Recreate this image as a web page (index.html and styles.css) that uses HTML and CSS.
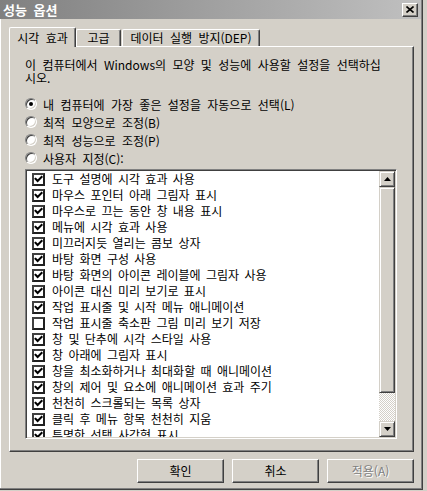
FILE: index.html
```html
<!DOCTYPE html>
<html lang="ko">
<head>
<meta charset="utf-8">
<title>성능 옵션</title>
<link rel="stylesheet" href="styles.css">
</head>
<body>
<div class="window">
  <div class="titlebar">
    <span class="title">성능 옵션</span>
    <div class="close"><svg width="8" height="7" viewBox="0 0 8 7"><path d="M0.5 0.5 L7.5 6.5 M7.5 0.5 L0.5 6.5" stroke="#000" stroke-width="1.6" fill="none"/></svg></div>
  </div>
  <div class="tabs">
    <div class="tab active">시각 효과</div>
    <div class="tab t2">고급</div>
    <div class="tab t3">데이터 실행 방지(DEP)</div>
  </div>
  <div class="panel">
    <p class="desc">이 컴퓨터에서 Windows의 모양 및 성능에 사용할 설정을 선택하십<br>시오.</p>
    <div class="radios">
      <div class="radio-row"><span class="radio on"></span><span>내 컴퓨터에 가장 좋은 설정을 자동으로 선택(L)</span></div>
      <div class="radio-row"><span class="radio"></span><span>최적 모양으로 조정(B)</span></div>
      <div class="radio-row"><span class="radio"></span><span>최적 성능으로 조정(P)</span></div>
      <div class="radio-row"><span class="radio"></span><span>사용자 지정(C):</span></div>
    </div>
    <div class="listbox">
      <ul class="items">
        <li><span class="cb"><svg viewBox="0 0 9 9"><path d="M1.5 3.8 L3.6 6 L7.6 2" /></svg></span>도구 설명에 시각 효과 사용</li>
        <li><span class="cb"><svg viewBox="0 0 9 9"><path d="M1.5 3.8 L3.6 6 L7.6 2" /></svg></span>마우스 포인터 아래 그림자 표시</li>
        <li><span class="cb"><svg viewBox="0 0 9 9"><path d="M1.5 3.8 L3.6 6 L7.6 2" /></svg></span>마우스로 끄는 동안 창 내용 표시</li>
        <li><span class="cb"><svg viewBox="0 0 9 9"><path d="M1.5 3.8 L3.6 6 L7.6 2" /></svg></span>메뉴에 시각 효과 사용</li>
        <li><span class="cb"><svg viewBox="0 0 9 9"><path d="M1.5 3.8 L3.6 6 L7.6 2" /></svg></span>미끄러지듯 열리는 콤보 상자</li>
        <li><span class="cb"><svg viewBox="0 0 9 9"><path d="M1.5 3.8 L3.6 6 L7.6 2" /></svg></span>바탕 화면 구성 사용</li>
        <li><span class="cb"><svg viewBox="0 0 9 9"><path d="M1.5 3.8 L3.6 6 L7.6 2" /></svg></span>바탕 화면의 아이콘 레이블에 그림자 사용</li>
        <li><span class="cb"><svg viewBox="0 0 9 9"><path d="M1.5 3.8 L3.6 6 L7.6 2" /></svg></span>아이콘 대신 미리 보기로 표시</li>
        <li><span class="cb"><svg viewBox="0 0 9 9"><path d="M1.5 3.8 L3.6 6 L7.6 2" /></svg></span>작업 표시줄 및 시작 메뉴 애니메이션</li>
        <li><span class="cb"></span>작업 표시줄 축소판 그림 미리 보기 저장</li>
        <li><span class="cb"><svg viewBox="0 0 9 9"><path d="M1.5 3.8 L3.6 6 L7.6 2" /></svg></span>창 및 단추에 시각 스타일 사용</li>
        <li><span class="cb"><svg viewBox="0 0 9 9"><path d="M1.5 3.8 L3.6 6 L7.6 2" /></svg></span>창 아래에 그림자 표시</li>
        <li><span class="cb"><svg viewBox="0 0 9 9"><path d="M1.5 3.8 L3.6 6 L7.6 2" /></svg></span>창을 최소화하거나 최대화할 때 애니메이션</li>
        <li><span class="cb"><svg viewBox="0 0 9 9"><path d="M1.5 3.8 L3.6 6 L7.6 2" /></svg></span>창의 제어 및 요소에 애니메이션 효과 주기</li>
        <li><span class="cb"><svg viewBox="0 0 9 9"><path d="M1.5 3.8 L3.6 6 L7.6 2" /></svg></span>천천히 스크롤되는 목록 상자</li>
        <li><span class="cb"><svg viewBox="0 0 9 9"><path d="M1.5 3.8 L3.6 6 L7.6 2" /></svg></span>클릭 후 메뉴 항목 천천히 지움</li>
        <li><span class="cb"><svg viewBox="0 0 9 9"><path d="M1.5 3.8 L3.6 6 L7.6 2" /></svg></span>투명한 선택 사각형 표시</li>
      </ul>
      <div class="scrollbar">
        <div class="sbtn"><svg width="7" height="4" viewBox="0 0 7 4"><path d="M3.5 0 L7 4 L0 4 Z" fill="#000"/></svg></div>
        <div class="track"><div class="thumb"></div></div>
        <div class="sbtn"><svg width="7" height="4" viewBox="0 0 7 4"><path d="M0 0 L7 0 L3.5 4 Z" fill="#000"/></svg></div>
      </div>
    </div>
  </div>
  <div class="buttons">
    <div class="btn">확인</div>
    <div class="btn">취소</div>
    <div class="btn disabled">적용(A)</div>
  </div>
</div>
</body>
</html>
```
FILE: styles.css
```css
* { box-sizing: border-box; }
html, body {
  margin: 0;
  padding: 0;
}
body {
  width: 427px;
  height: 491px;
  overflow: hidden;
  background: #d4d0c8;
  font-family: "Noto Sans CJK KR", "Noto Sans", sans-serif;
  font-size: 12px;
  color: #000;
  word-spacing: 3px;
}
.window {
  width: 423px;
  height: 490px;
  border-right: 1px solid #404040;
  border-bottom: 1px solid #404040;
  box-shadow: inset -1px -1px #808080, inset 1px 0 #fff;
  background: #d4d0c8;
}
.titlebar {
  height: 19px;
  width: 421px;
  display: flex;
  align-items: center;
  background: linear-gradient(to right, #808080, #c0c0c0);
  padding-left: 3px;
  padding-right: 3px;
}
.title {
  color: #fff;
  font-weight: bold;
  font-size: 13px;
  line-height: 19px;
}
.close {
  margin-left: auto;
  width: 16px;
  height: 14px;
  background: #d4d0c8;
  border: 1px solid;
  border-color: #fff #404040 #404040 #fff;
  box-shadow: inset -1px -1px #808080;
  display: flex;
  align-items: center;
  justify-content: center;
  padding-bottom: 1px;
}
.close svg { display: block; }
.tabs {
  margin-top: 8px;
  margin-left: 9px;
  height: 19px;
  display: flex;
  align-items: flex-end;
}
.tab {
  height: 17px;
  background: #d4d0c8;
  border-top: 1px solid #fff;
  border-left: 1px solid #fff;
  border-right: 1px solid #404040;
  border-radius: 2px 2px 0 0;
  box-shadow: inset -1px 0 #808080;
  text-align: center;
  line-height: 16px;
  white-space: nowrap;
}
.tab.active {
  height: 20px;
  width: 67px;
  margin-bottom: -1px;
  position: relative;
  z-index: 1;
  line-height: 19px;
}
.tab.t2 { width: 45px; }
.tab.t3 { width: 138px; margin-left: 1px; }
.panel {
  margin-left: 9px;
  width: 405px;
  height: 406px;
  border-top: 1px solid #fff;
  border-left: 1px solid #fff;
  border-right: 1px solid #404040;
  border-bottom: 1px solid #404040;
  box-shadow: inset -1px -1px #808080;
  padding: 11px 16px 0 15px;
}
.desc {
  margin: 0;
  line-height: 13px;
  white-space: nowrap;
}
.radios {
  margin-top: 11px;
}
.radio-row {
  height: 18px;
  display: flex;
  align-items: center;
  gap: 6px;
  white-space: nowrap;
}
.radio {
  width: 12px;
  height: 12px;
  border-radius: 50%;
  background: #fff;
  border: 1px solid;
  border-color: #808080 #fff #fff #808080;
  box-shadow: inset 1px 1px #404040, inset -1px -1px #d4d0c8;
  display: flex;
  align-items: center;
  justify-content: center;
  flex: none;
}
.radio.on::after {
  content: "";
  width: 4px;
  height: 4px;
  border-radius: 50%;
  background: #000;
}
.listbox {
  margin-top: 2px;
  width: 372px;
  height: 270px;
  border: 1px solid;
  border-color: #808080 #fff #fff #808080;
  box-shadow: inset 1px 1px #404040, inset -1px -1px #d4d0c8;
  background: #fff;
  padding: 1px;
  display: flex;
}
.items {
  flex: 1;
  list-style: none;
  margin: 0;
  padding: 0 0 0 5px;
  overflow: hidden;
  word-spacing: 2px;
}
.items li {
  height: 16px;
  display: flex;
  align-items: center;
  gap: 7px;
  white-space: nowrap;
  line-height: 16px;
}
.cb {
  width: 13px;
  height: 13px;
  flex: none;
  background: #fff;
  border: 2px solid #202020;
  border-top-color: #404040;
  border-left-color: #404040;
  display: flex;
  align-items: center;
  justify-content: center;
}
.cb svg {
  width: 9px;
  height: 9px;
  display: block;
}
.cb path {
  fill: none;
  stroke: #000;
  stroke-width: 2;
  stroke-linecap: square;
}
.scrollbar {
  width: 16px;
  display: flex;
  flex-direction: column;
}
.sbtn {
  height: 16px;
  flex: none;
  background: #d4d0c8;
  border: 1px solid;
  border-color: #d4d0c8 #404040 #404040 #d4d0c8;
  box-shadow: inset 1px 1px #fff, inset -1px -1px #808080;
  display: flex;
  align-items: center;
  justify-content: center;
}
.sbtn svg { display: block; }
.track {
  flex: 1;
  background-color: #d4d0c8;
  background-image: repeating-conic-gradient(#fff 0 25%, #d4d0c8 0 50%);
  background-size: 2px 2px;
}
.thumb {
  height: 206px;
  background: #d4d0c8;
  border: 1px solid;
  border-color: #d4d0c8 #404040 #404040 #d4d0c8;
  box-shadow: inset 1px 1px #fff, inset -1px -1px #808080;
}
.buttons {
  margin-top: 7px;
  margin-left: 9px;
  width: 405px;
  display: flex;
  justify-content: flex-end;
  gap: 8px;
}
.btn {
  width: 87px;
  height: 24px;
  background: #d4d0c8;
  border: 1px solid;
  border-color: #fff #404040 #404040 #fff;
  box-shadow: inset -1px -1px #808080;
  text-align: center;
  line-height: 21px;
}
.btn.disabled {
  color: #808080;
  text-shadow: 1px 1px #fff;
}
```
